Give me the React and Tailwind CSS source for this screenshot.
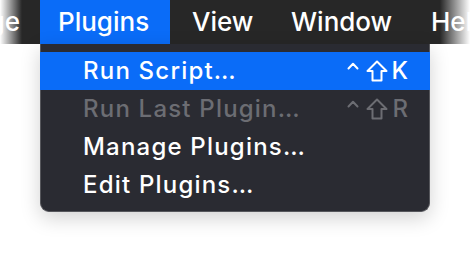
import React from 'react';

const Caret = ({ className }) => (
  <svg viewBox="0 0 12 8" className={className} fill="none" stroke="currentColor" strokeWidth="2" strokeLinecap="round" strokeLinejoin="round">
    <path d="M1.5 6.5 L6 1.8 L10.5 6.5" />
  </svg>
);

const ShiftArrow = ({ className }) => (
  <svg viewBox="0 0 22 22" className={className} fill="none" stroke="currentColor" strokeWidth="2" strokeLinejoin="round">
    <path d="M11 1.5 L20.5 11 H15.5 V20.5 H6.5 V11 H1.5 Z" />
  </svg>
);

const items = [
  { label: 'Run Script…', keyName: 'K', active: true },
  { label: 'Run Last Plugin…', keyName: 'R', disabled: true },
  { label: 'Manage Plugins…' },
  { label: 'Edit Plugins…' },
];

const MenuRow = ({ item }) => {
  const color = item.disabled ? 'text-[#6c6d73]' : 'text-white';
  return (
    <div className={`h-[38px] flex items-center pl-[43px] pr-[22px] ${item.active ? 'bg-[#0a6cf8]' : ''} ${color}`}>
      <span className="flex-1 text-[24px] leading-none font-medium tracking-[1.2px]">{item.label}</span>
      {item.keyName && (
        <span className="flex items-center">
          <Caret className="w-[12px] h-[8px] mb-[10px]" />
          <ShiftArrow className="w-[22px] h-[22px] ml-[7px]" />
          <span className="text-[24px] leading-none font-medium ml-[4px]">{item.keyName}</span>
        </span>
      )}
    </div>
  );
};

export default function App() {
  return (
    <div className="relative w-[470px] h-[260px] bg-white overflow-hidden" style={{ fontFamily: 'Inter, "Noto Sans", sans-serif' }}>
      {/* menu bar */}
      <div className="h-[44px] bg-[#272727] flex items-center text-white text-[26px] leading-none font-medium">
        <div className="h-full w-[40px] flex items-center justify-end pr-[20px] shrink-0 whitespace-nowrap">Page</div>
        <div className="h-full flex items-center pl-[18px] bg-[#0a6cf8] w-[130px] shrink-0">Plugins</div>
        <div className="h-full flex items-center pl-[22px] w-[100px] shrink-0">View</div>
        <div className="h-full flex items-center pl-[21px] w-[140px] shrink-0">Window</div>
        <div className="h-full flex items-center pl-[21px] shrink-0">Help</div>
      </div>

      {/* edge fades */}
      <div className="absolute left-0 top-0 w-[22px] h-[44px] bg-gradient-to-r from-white to-transparent" />
      <div className="absolute right-0 top-0 w-[30px] h-[44px] bg-gradient-to-l from-white to-transparent" />

      {/* dropdown */}
      <div className="absolute left-[40px] top-[44px] w-[390px] h-[168px] bg-[#2a2b32] border border-t-0 border-[#56575c] rounded-b-[9px] py-[8px] shadow-[0_6px_20px_rgba(0,0,0,0.18)]">
        <div className="-mx-px">
          {items.map((it) => (
            <MenuRow key={it.label} item={it} />
          ))}
        </div>
      </div>
    </div>
  );
}
